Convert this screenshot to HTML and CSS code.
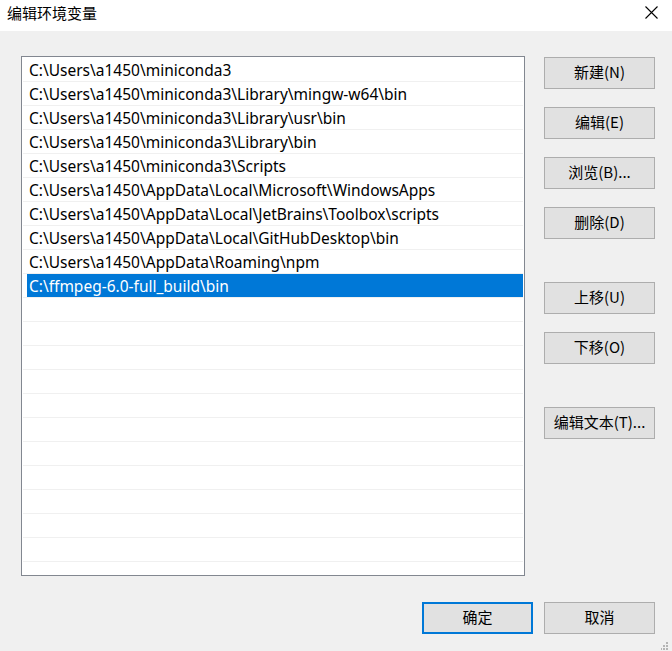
FILE: index.html
```html
<!DOCTYPE html>
<html lang="zh-CN">
<head>
<meta charset="utf-8">
<title>编辑环境变量</title>
<link rel="stylesheet" href="styles.css">
</head>
<body>
<div class="dialog">
  <div class="titlebar">
    <span class="title">编辑环境变量</span>
    <svg class="close" width="13" height="13" viewBox="0 0 13 13"><path d="M0.5 0.5 L12.5 12.5 M12.5 0.5 L0.5 12.5" stroke="#000" stroke-width="1.1" fill="none"/></svg>
  </div>
  <div class="content">
    <div class="list">
      <div class="row"><span class="cell">C:\Users\a1450\miniconda3</span></div>
      <div class="row"><span class="cell">C:\Users\a1450\miniconda3\Library\mingw-w64\bin</span></div>
      <div class="row"><span class="cell">C:\Users\a1450\miniconda3\Library\usr\bin</span></div>
      <div class="row"><span class="cell">C:\Users\a1450\miniconda3\Library\bin</span></div>
      <div class="row"><span class="cell">C:\Users\a1450\miniconda3\Scripts</span></div>
      <div class="row"><span class="cell">C:\Users\a1450\AppData\Local\Microsoft\WindowsApps</span></div>
      <div class="row"><span class="cell">C:\Users\a1450\AppData\Local\JetBrains\Toolbox\scripts</span></div>
      <div class="row"><span class="cell">C:\Users\a1450\AppData\Local\GitHubDesktop\bin</span></div>
      <div class="row"><span class="cell">C:\Users\a1450\AppData\Roaming\npm</span></div>
      <div class="row selected"><span class="cell">C:\ffmpeg-6.0-full_build\bin</span></div>
      <div class="row"><span class="cell"></span></div>
      <div class="row"><span class="cell"></span></div>
      <div class="row"><span class="cell"></span></div>
      <div class="row"><span class="cell"></span></div>
      <div class="row"><span class="cell"></span></div>
      <div class="row"><span class="cell"></span></div>
      <div class="row"><span class="cell"></span></div>
      <div class="row"><span class="cell"></span></div>
      <div class="row"><span class="cell"></span></div>
      <div class="row"><span class="cell"></span></div>
      <div class="row"><span class="cell"></span></div>
    </div>
    <div class="side">
      <button class="btn">新建(N)</button>
      <button class="btn">编辑(E)</button>
      <button class="btn">浏览(B)...</button>
      <button class="btn">删除(D)</button>
      <button class="btn group">上移(U)</button>
      <button class="btn">下移(O)</button>
      <button class="btn group">编辑文本(T)...</button>
    </div>
  </div>
  <div class="footer">
    <button class="btn default">确定</button>
    <button class="btn">取消</button>
  </div>
  <svg class="grip" width="8" height="8" viewBox="0 0 8 8">
    <rect x="5" y="0" width="2" height="2" fill="#b4b4b4"/>
    <rect x="2" y="3" width="2" height="2" fill="#b4b4b4"/>
    <rect x="5" y="3" width="2" height="2" fill="#b4b4b4"/>
    <rect x="-1" y="6" width="2" height="2" fill="#b4b4b4"/>
    <rect x="2" y="6" width="2" height="2" fill="#b4b4b4"/>
    <rect x="5" y="6" width="2" height="2" fill="#b4b4b4"/>
  </svg>
</div>
</body>
</html>
```

FILE: styles.css
```css
html, body {
  margin: 0;
  padding: 0;
}
body {
  font-family: "Noto Sans CJK SC", "Noto Sans", sans-serif;
  font-size: 15px;
  color: #000;
}
.dialog {
  position: relative;
  width: 672px;
  height: 651px;
  background: #f0f0f0;
  overflow: hidden;
}
.titlebar {
  height: 31px;
  background: #fff;
  display: flex;
  align-items: center;
  justify-content: space-between;
  padding: 0 14px 0 7px;
  box-sizing: border-box;
}
.title {
  font-size: 15px;
  line-height: 20px;
  margin-top: -6px;
}
.close {
  display: block;
  margin-top: -7px;
}
.content {
  display: flex;
  gap: 19px;
  padding: 25px 17px 0 21px;
}
.list {
  box-sizing: border-box;
  width: 504px;
  height: 520px;
  border: 1px solid #828790;
  background: #fff;
  padding: 1px 1px 0 1px;
  overflow: hidden;
}
.row {
  height: 24px;
  box-sizing: border-box;
  border-bottom: 1px solid #f0f0f0;
  display: flex;
}
.cell {
  flex: 1;
  margin-left: 4px;
  padding-left: 2px;
  height: 23px;
  line-height: 25px;
  white-space: nowrap;
  overflow: hidden;
  font-family: "Noto Sans", "Noto Sans CJK SC", sans-serif;
  font-size: 15.5px;
}
.row.selected .cell {
  background: #0078d7;
  color: #fff;
}
.side {
  display: flex;
  flex-direction: column;
  gap: 18px;
  padding-top: 1px;
}
.btn {
  box-sizing: border-box;
  width: 111px;
  height: 32px;
  border: 1px solid #adadad;
  background: #e1e1e1;
  font-family: "Noto Sans CJK SC", "Noto Sans", sans-serif;
  font-size: 15px;
  color: #000;
  padding: 0 0 3px 0;
  margin: 0;
}
.btn.group {
  margin-top: 25px;
}
.btn.default {
  border: 2px solid #0078d7;
}
.footer {
  display: flex;
  justify-content: flex-end;
  gap: 11px;
  padding: 26px 17px 0 0;
}
.grip {
  position: absolute;
  right: 3px;
  bottom: 1px;
}
```
